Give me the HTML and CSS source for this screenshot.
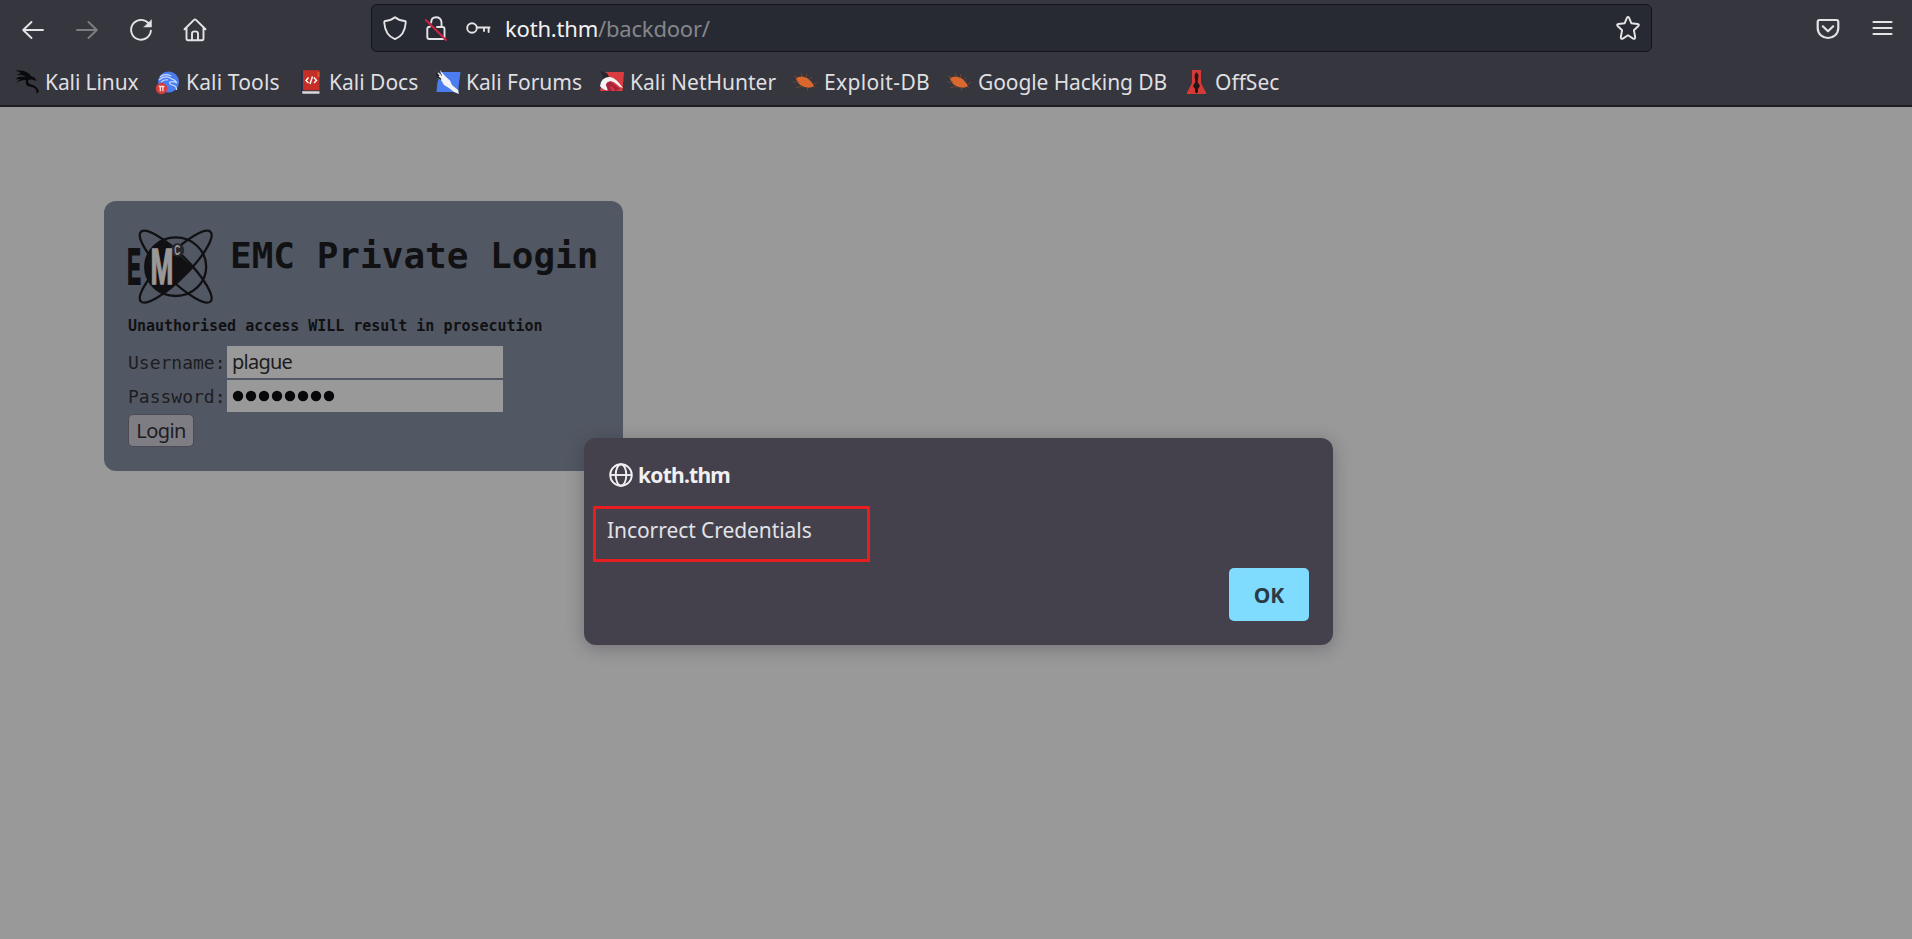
FILE: index.html
```html
<!DOCTYPE html>
<html lang="en">
<head>
<meta charset="utf-8">
<title>EMC Private Login</title>
<link rel="stylesheet" href="styles.css">
</head>
<body>
<header class="chrome">
  <div class="navbar">
    <div class="nav-buttons">
      <span class="nav-btn"><svg class="ico" viewBox="0 0 24 24"><path d="M22 12H2.200M10.500 4L2.200 12L10.500 20"/></svg></span>
      <span class="nav-btn dim"><svg class="ico" viewBox="0 0 24 24"><path d="M2 12H21.800M13.500 4L21.800 12L13.500 20"/></svg></span>
      <span class="nav-btn"><svg class="ico" viewBox="0 0 24 24"><path d="M19.400 5.200A9.900 9.900 0 1 0 21.900 12.700"/><path class="solid" d="M22.500 2V9H15Z"/></svg></span>
      <span class="nav-btn"><svg class="ico" viewBox="0 0 24 24"><path d="M1.500 11.300L11 1.900Q12 1 13 1.900L22.500 11.300M3.500 9.800V20.500Q3.500 22.200 5 22.200H19Q20.500 22.200 20.500 20.500V9.800M9 22V15.500Q9 13.400 12 13.400T15 15.500V22"/></svg></span>
    </div>
    <div class="urlbar">
      <svg class="ico shield" viewBox="0 0 24 24"><path d="M12 1.200C9 3.700 6 4.600 2.300 5C1.400 5.100 1.200 6 1.300 7C1.900 14.500 5 20.500 12 23.200C19 20.500 22.100 14.500 22.700 7C22.800 6 22.600 5.100 21.700 5C18 4.600 15 3.700 12 1.200Z"/></svg>
      <svg class="ico lock" viewBox="0 0 24 24"><path d="M7.200 6.500Q7.200 1.200 12 1.200T17.500 6.200V11M6 10.800Q3.300 10.800 3.300 13V21Q3.300 23 5.300 23H18.500Q20.500 23 20.500 21V13Q20.500 11 18.500 11H13"/><path class="slash" d="M1.800 4L22 24"/></svg>
      <svg class="ico key" viewBox="0 0 24 24"><circle cx="6" cy="12" r="4.800"/><path d="M11 11.500H23.600M22.600 12V16M18 12V15"/></svg>
      <span class="url"><span class="host">koth.thm</span><span class="path">/backdoor/</span></span>
      <svg class="ico star" viewBox="0 0 24 24"><path d="M10.900 1.800Q12 .2 13.100 1.800L15.300 7.200L21.600 8Q23.700 8.400 22.400 10L17.900 14.300L19.200 21.200Q19.200 23.400 17.200 22.600L12 19.300L6.800 22.600Q4.800 23.400 4.800 21.200L6.100 14.300L1.600 10Q.3 8.400 2.400 8L8.700 7.200Z"/></svg>
    </div>
    <div class="nav-end">
      <span class="nav-btn"><svg class="ico" viewBox="0 0 24 24"><path class="thick" d="M3.500 3H20.500Q22.300 3 22.300 5V11C22.300 17 17.500 21 12 21S1.700 17 1.700 11V5Q1.700 3 3.500 3Z"/><path class="thick" d="M6.800 9.300L12 14.300L17.200 9.300"/></svg></span>
      <span class="nav-btn"><svg class="ico" viewBox="0 0 24 24"><path class="thick" d="M3.500 5H21.500M3.500 11H21.500M3.500 17H21.500"/></svg></span>
    </div>
  </div>
  <nav class="bookmarks">
    <span class="mark m1"><svg class="fav" viewBox="0 0 24 24"><path class="dragon" d="M0 .3L8 .8Q14 2.500 16 6L20 8L21.500 11L17 9.500Q13 9 13 11.500Q13.500 14 18 15Q23 17 24 22L21.500 23.800Q22 19 18.500 17.500L12.500 16Q10 14 11 10Q5 10 1 13L5 9Q2 8.500 .5 10L3 7Q8 6.300 11 7.200Q7 4 1 5L6 3Z"/></svg><span>Kali Linux</span></span>
    <span class="mark m2"><svg class="fav" viewBox="0 0 24 24"><circle cx="12.500" cy="12" r="10.500" fill="#4c7df0"/><path d="M3 10Q9 5 14 8L19 10.500L21 13Q17 11 14 12Q12 14 18 15.500Q21 17 20.500 20M5 12Q9 9 12 10M4 7Q9 3 15 6" fill="none" stroke="#c9dcff" stroke-width="1.200"/><circle cx="5.500" cy="18.500" r="5.700" fill="#d73c3c"/><path d="M2.800 16.500H8.400M4.300 17V21.200M6.900 17V21.200" fill="none" stroke="#ffe2df" stroke-width="1.300"/></svg><span>Kali Tools</span></span>
    <span class="mark m3"><svg class="fav" viewBox="0 0 24 24"><path d="M3.500 .5V23Q2 22 2 20V2Q2 .8 3.500 .5Z" fill="#1d2a5c"/><path d="M4 .2H20.500V20.300H4Z" fill="#c52f28"/><path d="M3 21.300H20.500V23.800H3.500Z" fill="#d9d9de"/><path d="M19.500 2V7" stroke="#e2562e" stroke-width="2"/><path d="M9.500 7.500L7 10.500L9.500 13M15 7.500L17.500 10.500L15 13M13.500 6.500L11 14" fill="none" stroke="#fff" stroke-width="1.400"/></svg><span>Kali Docs</span></span>
    <span class="mark m4"><svg class="fav" viewBox="0 0 24 24"><path d="M5 2H24.500L22.500 17V22H.5L1.500 12Z" fill="#4b7cf0"/><path d="M0 1L5 5L4 0L9 6L14 10.500L16 15L22 20L23 24L18 22L13 18L8 15L5 10L1 8L4 8Z" fill="#f1f3f6"/><path d="M0 1L5 5L4 0L6 6L5 10L1 8" fill="#202126"/><path d="M2 3L8 9M3 6L9 11" stroke="#eee" stroke-width="1.200"/></svg><span>Kali Forums</span></span>
    <span class="mark m5"><svg class="fav" viewBox="0 0 24 24"><path d="M5 2H24L22.500 21H0L2 12Z" fill="#d93c40"/><path d="M0 1L7 3L9 7L2 12L3 6Z" fill="#25252b"/><path d="M0 16Q1 7 10 7Q15 7 23 18L20 17Q14 11 10 11Q7 12 6 15L10 20Q3 21 0 16Z" fill="#f5f4f5"/><path d="M6 15Q7 11 11 12L20 19L15 21Q13 16 10 16L12 21H8Z" fill="#a8213d"/></svg><span>Kali NetHunter</span></span>
    <span class="mark m6"><svg class="fav" viewBox="0 0 24 24"><path d="M2 8Q7 5 13 8Q18 11 20 16.500Q14 19 8 16Q3 13 2 8Z" fill="#d8682e"/><path d="M0 6L4 8M7 3L9 7M13 4L12 8M-1 12L5 12M2 18L8 16M9 18V16M14 21L13 17M16 9L18 7M19 15L23 12M19 16L21 18" stroke="#80482f" stroke-width=".8"/></svg><span>Exploit-DB</span></span>
    <span class="mark m7"><svg class="fav" viewBox="0 0 24 24"><path d="M2 8Q7 5 13 8Q18 11 20 16.500Q14 19 8 16Q3 13 2 8Z" fill="#d8682e"/><path d="M0 6L4 8M7 3L9 7M13 4L12 8M-1 12L5 12M2 18L8 16M9 18V16M14 21L13 17M16 9L18 7M19 15L23 12M19 16L21 18" stroke="#80482f" stroke-width=".8"/></svg><span>Google Hacking DB</span></span>
    <span class="mark m8"><svg class="fav" viewBox="0 0 24 24"><path d="M7 0H16V13L21 22.500V24H2V22.500L7 13Z" fill="#d43b37"/><path d="M11.500 2L13.500 5L12.700 12L15 16L13 19V22L11.500 23.500L10 22V19L8 16L10.300 12L9.500 5Z" fill="#241416"/></svg><span>OffSec</span></span>
  </nav>
</header>
<main class="page">
  <form class="card">
    <div class="heading">
      <svg class="logo" viewBox="0 0 86 76">
        <g fill="none" stroke="#111114" stroke-width="2.300">
          <ellipse cx="47.700" cy="36.700" rx="30.500" ry="29.300"/>
          <ellipse cx="47.700" cy="36.700" rx="49.200" ry="12.500" transform="rotate(45 47.700 36.700)"/>
          <ellipse cx="47.700" cy="36.700" rx="49.200" ry="12.500" transform="rotate(-45 47.700 36.700)"/>
        </g>
        <path d="M35.500 9.500L64 37L36 64Q17.500 57 17.500 37T35.500 9.500Z" fill="#111114"/>
        <circle cx="49.500" cy="20" r="6.800" fill="#25272b"/>
        <text class="logo-letter" transform="translate(-.8 54) scale(.41 1)" font-size="50" fill="#111114" stroke="#111114" stroke-width="2">E</text>
        <text class="logo-letter" transform="translate(22.600 54) scale(.55 1)" font-size="50" fill="#99999a" stroke="#99999a" stroke-width="1.500">M</text>
        <text class="logo-letter" transform="translate(46.300 25) scale(.6 1)" font-size="14" fill="#99999a">C</text>
      </svg>
      <h1 class="title">EMC Private Login</h1>
    </div>
    <p class="warning">Unauthorised access WILL result in prosecution</p>
    <div class="field"><span class="label">Username:</span><span class="input"><span class="value">plague</span></span></div>
    <div class="field"><span class="label">Password:</span><span class="input"><svg class="dots" viewBox="0 0 104 12"><circle cx="6" cy="6" r="5.200"/><circle cx="19" cy="6" r="5.200"/><circle cx="32" cy="6" r="5.200"/><circle cx="45" cy="6" r="5.200"/><circle cx="58" cy="6" r="5.200"/><circle cx="71" cy="6" r="5.200"/><circle cx="84" cy="6" r="5.200"/><circle cx="97" cy="6" r="5.200"/></svg></span></div>
    <button class="login" type="button">Login</button>
  </form>
</main>
<section class="dialog">
  <div class="origin"><svg class="globe" viewBox="0 0 24 24"><circle cx="12" cy="12" r="10.800"/><ellipse cx="12" cy="12" rx="5.300" ry="10.800"/><path d="M1.200 12H22.800"/></svg><span>koth.thm</span></div>
  <div class="message"><span>Incorrect Credentials</span></div>
  <button class="ok" type="button">OK</button>
</section>
</body>
</html>
```
FILE: styles.css
```css
* { box-sizing: border-box; }

body {
  margin: 0;
  width: 1912px;
  height: 939px;
  overflow: hidden;
  background: #99999a;
  font-family: "Noto Sans", sans-serif;
  display: flex;
  flex-direction: column;
}

/* Browser chrome */
.chrome {
  height: 107px;
  flex: none;
  background: #36363e;
  border-bottom: 2px solid #1d1d22;
}
.navbar { display: flex; height: 57px; padding-left: 6px; }
.nav-buttons { display: flex; width: 365px; }
.nav-btn { width: 54px; height: 59px; display: flex; align-items: center; justify-content: center; }
.nav-end .nav-btn { height: 58px; }
.dim { opacity: .4; }
.ico {
  width: 24px;
  height: 24px;
  flex: none;
  overflow: visible;
  fill: none;
  stroke: #e4e4e6;
  stroke-width: 1.900;
  stroke-linecap: round;
  stroke-linejoin: round;
}
.ico .solid { fill: #e4e4e6; stroke-width: .5; }
.ico .thick { stroke-width: 2.200; }
.ico .slash { stroke: #d02044; }
.urlbar {
  width: 1281px;
  height: 48px;
  margin-top: 4px;
  padding: 0 11px 0 11px;
  border: 1px solid #131318;
  border-radius: 6px;
  background: #282a33;
  display: flex;
  align-items: center;
}
.lock { margin-left: 17px; }
.key { margin-left: 18px; }
.star { margin-left: auto; }
.url { margin-left: 15px; font-size: 22px; letter-spacing: -.2px; white-space: nowrap; }
.host { color: #f2f2f4; }
.path { color: #85868b; }
.nav-end { display: flex; margin-left: 149px; }

.bookmarks { display: flex; height: 48px; padding: 2px 0 0 15px; align-items: center; }
.mark { display: flex; align-items: center; gap: 6px; color: #dfdfe1; font-size: 21px; white-space: nowrap; flex: none; }
.fav { width: 24px; height: 24px; flex: none; overflow: visible; }
.dragon { fill: #090a0c; }
.m1 { width: 141px; letter-spacing: -.1px; }
.m2 { width: 143px; letter-spacing: .15px; }
.m3 { width: 137px; }
.m4 { width: 164px; }
.m5 { width: 194px; }
.m6 { width: 154px; letter-spacing: .35px; }
.m7 { width: 237px; letter-spacing: -.1px; }

/* Login form */
.page { padding: 94px 0 0 104px; }
.card {
  width: 519px;
  height: 270px;
  padding: 29px 24px 0;
  border-radius: 12px;
  background: #525863;
  color: #111114;
  font-family: "DejaVu Sans Mono", monospace;
}
.heading { display: flex; height: 88px; }
.logo { width: 86px; height: 76px; overflow: visible; }
.logo-letter { font-family: "Liberation Sans", sans-serif; font-weight: bold; }
.title { margin: 5px 0 0 16px; font-size: 36px; line-height: 42px; white-space: nowrap; }
.warning { margin: 0; height: 27px; font-size: 15px; line-height: 17px; letter-spacing: -.02px; font-weight: bold; }
.field { display: flex; height: 34px; align-items: center; }
.label { width: 99px; font-size: 18px; color: #1c1d21; }
.input {
  width: 276px;
  height: 32px;
  padding-left: 5px;
  background: #99999a;
  color: #1c1c20;
  font: 20px/32px "Noto Sans", sans-serif;
  display: flex;
  align-items: center;
}
.value { letter-spacing: -.75px; }
.dots { width: 104px; height: 12px; fill: #08080a; }
.login {
  display: block;
  width: 66px;
  height: 33px;
  margin-top: 1px;
  padding: 0;
  border: 1px solid #4b4a54;
  border-radius: 5px;
  background: #7e7d84;
  color: #1c1c22;
  font: 20px/30px "Noto Sans", sans-serif;
  letter-spacing: -.6px;
}

/* Alert laid over the page */
.dialog {
  position: absolute;
  left: 584px;
  top: 438px;
  width: 749px;
  height: 207px;
  padding: 23px 24px 0 9px;
  border-radius: 12px;
  background: #44414c;
  color: #f0f0f3;
  box-shadow: 0 3px 18px rgba(30, 30, 40, .3);
  display: flex;
  flex-direction: column;
}
.origin { display: flex; align-items: center; height: 28px; padding-left: 16px; gap: 5px; font-size: 21px; font-weight: bold; letter-spacing: -.75px; }
.globe { width: 24px; height: 24px; fill: none; stroke: #f0f0f3; stroke-width: 1.900; }
.message {
  width: 277px;
  height: 56px;
  margin-top: 17px;
  padding: 7px 0 0 11px;
  border: 3px solid #e71d1f;
  font-size: 21px;
  line-height: 28px;
  letter-spacing: -.07px;
  color: #e2e2e6;
  white-space: nowrap;
}
.ok {
  align-self: flex-end;
  width: 80px;
  height: 53px;
  margin-top: 6px;
  padding: 0;
  border: 0;
  border-radius: 5px;
  background: #80dcff;
  color: #2b3a44;
  font: bold 21px "Noto Sans", sans-serif;
}
```
